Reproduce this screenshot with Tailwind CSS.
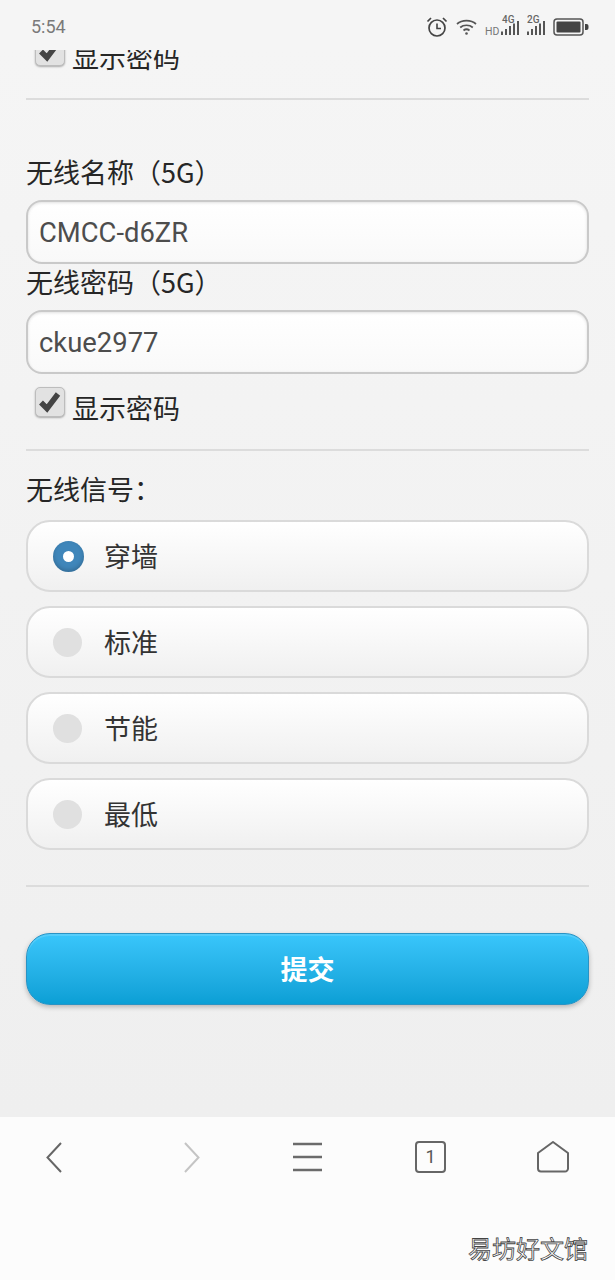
<!DOCTYPE html>
<html lang="zh">
<head>
<meta charset="utf-8">
<script src="https://cdn.jsdelivr.net/npm/@tailwindcss/browser@4"></script>
</head>
<body class="m-0 w-[615px] h-[1280px] overflow-hidden bg-[#f4f4f4] font-['Roboto','Noto_Sans_CJK_SC',sans-serif]">
<div class="relative w-[615px] h-[1280px] flex flex-col">
  <!-- status bar -->
  <div class="h-[50px] shrink-0 bg-[#f5f5f5] flex items-center pl-[31px] pt-[3px] relative z-10">
    <span class="text-[18px] leading-none text-[#7a7a7a] w-[36px]">5:54</span>
    <div class="ml-[359px] flex items-center">
      <svg width="22" height="22" viewBox="0 0 22 22" fill="none" stroke="#444" stroke-width="1.700"><circle cx="11" cy="12" r="8"/><path d="M11 7.500V12.500H15" stroke-width="1.600"/><path d="M1.500 5.500 5 2M20.500 5.500 17 2" stroke-width="1.700"/></svg>
      <svg class="ml-[8px]" width="21" height="18" viewBox="0 0 21 18" fill="none" stroke="#555" stroke-width="1.700"><path d="M1 6C6 1.500 15 1.500 20 6"/><path d="M4.200 9.500C7.500 6.500 13.500 6.500 16.800 9.500"/><path d="M7.500 12.500C9.300 11 11.700 11 13.500 12.500"/><circle cx="10.500" cy="15.500" r="1.300" fill="#555" stroke="none"/></svg>
      <svg class="ml-[8px]" width="35" height="24" viewBox="0 0 35 24"><text x="0" y="20" font-family="Roboto" font-size="10.500" fill="#777">HD</text><text x="17" y="8" font-family="Roboto" font-size="10" font-weight="500" fill="#666">4G</text><path d="M17 16.500v3.500M21 14v6M25 11v9M29 8.500v11.500M33 6v14" stroke="#555" stroke-width="2" fill="none"/></svg>
      <svg class="ml-[7px]" width="20" height="24" viewBox="0 0 20 24"><text x="0" y="8" font-family="Roboto" font-size="10" font-weight="500" fill="#666">2G</text><path d="M1 16.500v3.500M5 14v6M9 11v9M13 8.500v11.500M17 6v14" stroke="#555" stroke-width="2" fill="none"/></svg>
      <svg class="ml-[6px]" width="36" height="18" viewBox="0 0 36 18"><rect x="1" y="1" width="29" height="16" rx="3" fill="none" stroke="#555" stroke-width="1.500"/><rect x="3.500" y="3.500" width="24" height="11" rx="1" fill="#444"/><path d="M32 6h1.500a2 2 0 0 1 2 2v2a2 2 0 0 1-2 2H32z" fill="#444"/></svg>
    </div>
  </div>

  <!-- page content -->
  <main class="h-[1067px] shrink-0 overflow-hidden bg-gradient-to-b from-[#f5f5f5] to-[#efefef] px-[26px] text-[27px] text-[#262626] font-['Noto_Sans_CJK_SC','Roboto',sans-serif]">
    <label class="-mt-[14px] flex items-start pl-[9px] h-[62px]">
      <span class="w-[30px] h-[30px] rounded-[5px] bg-[#e2e2e2] border border-[#bdbdbd] shadow-[0_1px_2px_rgba(0,0,0,0.3)] flex items-center justify-center">
        <svg width="24" height="22" viewBox="0 0 24 22"><path d="M3 11.500 9 17.500 20 3" fill="none" stroke="#444" stroke-width="5.500"/></svg>
      </span>
      <span class="ml-[7px] mt-[4px] leading-[34px]">显示密码</span>
    </label>
    <hr class="border-0 h-[2px] bg-[#dcdcdc]">
    <p class="mt-[54px] h-[46px] leading-[36px]">无线名称（5G）</p>
    <div class="h-[64px] rounded-[16px] border-2 border-[#c9c9c9] bg-gradient-to-b from-[#fff] to-[#f9f9f9] shadow-[inset_0_1px_3px_rgba(0,0,0,0.12)] flex items-center pl-[11px] pt-[3px] text-[27.400px] text-[#4d4d4d] font-['Roboto',sans-serif]">CMCC-d6ZR</div>
    <p class="h-[46px] leading-[36px]">无线密码（5G）</p>
    <div class="h-[64px] rounded-[16px] border-2 border-[#c9c9c9] bg-gradient-to-b from-[#fff] to-[#f9f9f9] shadow-[inset_0_1px_3px_rgba(0,0,0,0.12)] flex items-center pl-[11px] pt-[3px] text-[27.400px] text-[#4d4d4d] font-['Roboto',sans-serif]">ckue2977</div>
    <label class="mt-[13px] flex items-start pl-[9px] h-[62px]">
      <span class="w-[30px] h-[30px] rounded-[5px] bg-[#e2e2e2] border border-[#bdbdbd] shadow-[0_1px_2px_rgba(0,0,0,0.3)] flex items-center justify-center">
        <svg width="24" height="22" viewBox="0 0 24 22"><path d="M3 11.500 9 17.500 20 3" fill="none" stroke="#444" stroke-width="5.500"/></svg>
      </span>
      <span class="ml-[7px] mt-[4px] leading-[34px]">显示密码</span>
    </label>
    <hr class="border-0 h-[2px] bg-[#dcdcdc]">
    <p class="mt-[20px] h-[49px] leading-[36px]">无线信号：</p>
    <div class="flex flex-col gap-[14px]">
      <div class="h-[72px] rounded-[24px] border-2 border-[#dadada] bg-gradient-to-b from-[#fff] to-[#f0f0f0] flex items-center pl-[25px] text-[#333]">
        <span class="w-[31px] h-[31px] rounded-full bg-[#3f86ba] shadow-[inset_0_-2px_4px_rgba(0,0,0,0.2)] flex items-center justify-center"><span class="w-[11px] h-[11px] rounded-full bg-white"></span></span>
        <span class="ml-[20px]">穿墙</span>
      </div>
      <div class="h-[72px] rounded-[24px] border-2 border-[#dadada] bg-gradient-to-b from-[#fff] to-[#f0f0f0] flex items-center pl-[25px] text-[#333]">
        <span class="w-[29px] h-[29px] rounded-full bg-[#e0e0e0]"></span>
        <span class="ml-[22px]">标准</span>
      </div>
      <div class="h-[72px] rounded-[24px] border-2 border-[#dadada] bg-gradient-to-b from-[#fff] to-[#f0f0f0] flex items-center pl-[25px] text-[#333]">
        <span class="w-[29px] h-[29px] rounded-full bg-[#e0e0e0]"></span>
        <span class="ml-[22px]">节能</span>
      </div>
      <div class="h-[72px] rounded-[24px] border-2 border-[#dadada] bg-gradient-to-b from-[#fff] to-[#f0f0f0] flex items-center pl-[25px] text-[#333]">
        <span class="w-[29px] h-[29px] rounded-full bg-[#e0e0e0]"></span>
        <span class="ml-[22px]">最低</span>
      </div>
    </div>
    <hr class="mt-[35px] border-0 h-[2px] bg-[#dcdcdc]">
    <div class="mt-[46px] h-[72px] rounded-[24px] border border-[#2a93c4] bg-gradient-to-b from-[#39c6fb] to-[#0a9fd5] shadow-[0_2px_5px_rgba(0,0,0,0.25),inset_0_2px_0_rgba(255,255,255,0.15)] flex items-center justify-center text-white font-bold">提交</div>
  </main>

  <!-- browser nav -->
  <nav class="relative h-[163px] shrink-0 bg-[#fcfcfc] flex items-start pt-[24px] pl-[46px]">
    <svg width="16" height="32" viewBox="0 0 16 32" fill="none" stroke="#666" stroke-width="2"><path d="M15 2 1.500 16.500 15 31"/></svg>
    <svg class="ml-[122px]" width="16" height="32" viewBox="0 0 16 32" fill="none" stroke="#c4c4c4" stroke-width="2"><path d="M1 2 14.500 16.500 1 31"/></svg>
    <svg class="ml-[92px]" width="31" height="32" viewBox="0 0 31 32" fill="none" stroke="#6b6b6b" stroke-width="2.400"><path d="M1 3H30M1 16H30M1 29H30"/></svg>
    <div class="ml-[92px] w-[31px] h-[32px] rounded-[4px] border-2 border-[#666] flex items-center justify-center text-[18px] leading-none text-[#555]">1</div>
    <svg class="ml-[91px]" width="32" height="32" viewBox="0 0 32 32" fill="none" stroke="#666" stroke-width="2"><path d="M16 1 31 12V27.500a3 3 0 0 1-3 3H4a3 3 0 0 1-3-3V12Z" stroke-linejoin="round"/></svg>
    <span class="absolute left-[468px] top-[113px] text-[24px] leading-[36px] text-white font-['Noto_Sans_CJK_SC',sans-serif] [-webkit-text-stroke:0.8px_#444]">易坊好文馆</span>
  </nav>
</div>
</body>
</html>
